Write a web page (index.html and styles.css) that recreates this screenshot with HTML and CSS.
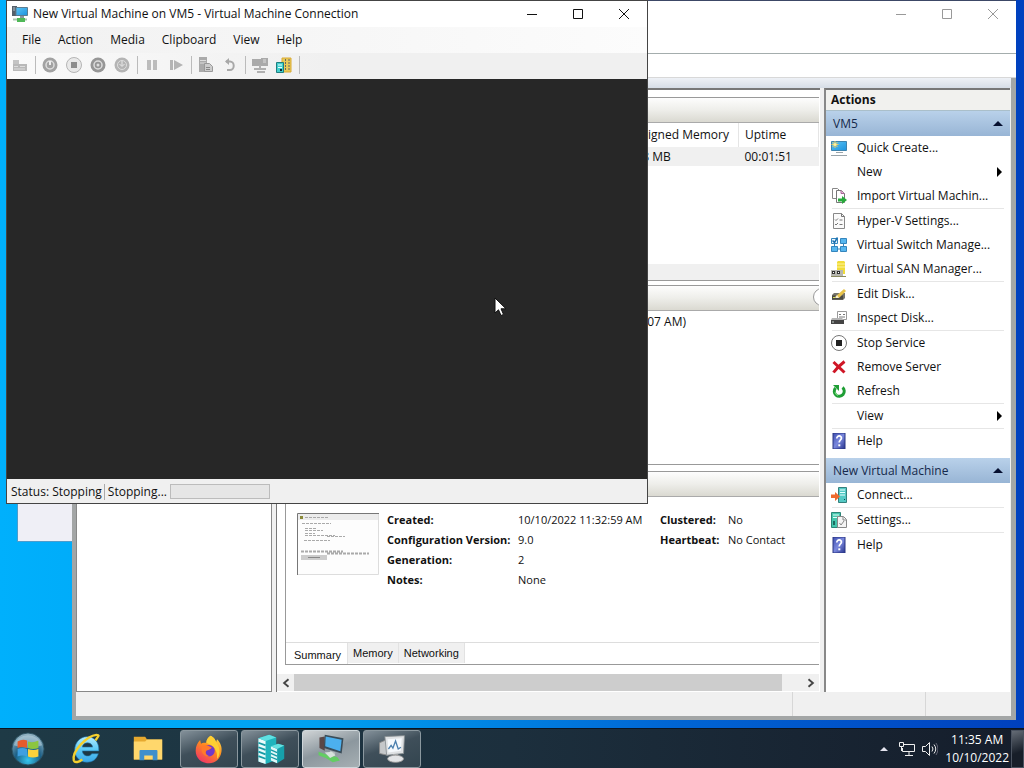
FILE: index.html
```html
<!DOCTYPE html>
<html lang="en">
<head>
  <meta charset="UTF-8" />
  <meta name="viewport" content="width=device-width, initial-scale=1.0"/>
  <title>Hyper-V Manager</title>
  <link rel="stylesheet" href="styles.css">
</head>
<body>
  <svg class="defs" aria-hidden="true">
    <defs>
      <linearGradient id="screen-blue" x1="0" y1="0" x2="1" y2="1">
        <stop offset="0" stop-color="#5cc4f5"/><stop offset="1" stop-color="#1c92dd"/>
      </linearGradient>
      <linearGradient id="help-blue" x1="0" y1="0" x2="1" y2="1">
        <stop offset="0" stop-color="#3f4fb0"/><stop offset=".5" stop-color="#7a88dd"/><stop offset="1" stop-color="#27338c"/>
      </linearGradient>
      <radialGradient id="orb" cx=".5" cy=".85" r=".8">
        <stop offset="0" stop-color="#35c5ee"/><stop offset=".5" stop-color="#1b5f86"/><stop offset="1" stop-color="#8fb0c0"/>
      </radialGradient>
      <linearGradient id="ie" x1="0" y1="0" x2="0" y2="1">
        <stop offset="0" stop-color="#b4ecff"/><stop offset=".5" stop-color="#5ccbf7"/><stop offset="1" stop-color="#39a7e8"/>
      </linearGradient>
      <linearGradient id="fox" x1=".8" y1="0" x2=".2" y2="1">
        <stop offset="0" stop-color="#ffe14a"/><stop offset=".45" stop-color="#ff8a1e"/><stop offset="1" stop-color="#f0306a"/>
      </linearGradient>
      <symbol id="i-help" viewBox="0 0 16 16">
        <path d="M2 0h12v16H2z" fill="url(#help-blue)" stroke="#2b3784"/>
        <path d="M5.800 5.500c0-3.600 5-3.200 4.600-.2-.2 1.700-2.200 1.900-2.200 4.200" fill="none" stroke="#fff" stroke-width="1.700"/>
        <path d="M7.300 11.300h2v2h-2z" fill="#fff"/>
      </symbol>
      <symbol id="i-vm" viewBox="0 0 16 16">
        <path d="M0 0h5v10H0z" fill="#55606a"/><path d="M1 2h2M1 4h2" stroke="#b5c0c8"/>
        <path d="M4 1.500h11.500v8H4z" fill="url(#screen-blue)" stroke="#5c7c90"/>
        <path d="M8 10h4v2H8z" fill="#8a979e"/>
        <path d="M1 13.500h14" stroke="#a8c4ae" stroke-width="2"/>
        <path d="M5 12h8v4H5z" fill="#4fb857"/>
      </symbol>
    </defs>
  </svg>

  <main class="desktop">
    <div class="window window--hidden"></div>

    <section class="window manager" aria-label="Hyper-V Manager">
      <header class="manager__title">
        <button class="caption" aria-label="Minimize"><svg viewBox="0 0 12 12"><path d="M1 6.500h10"/></svg></button>
        <button class="caption" aria-label="Maximize"><svg viewBox="0 0 12 12"><path d="M1.500 1.500h9v9h-9z"/></svg></button>
        <button class="caption" aria-label="Close"><svg viewBox="0 0 12 12"><path d="M1 1l10 10M11 1L1 11"/></svg></button>
      </header>
      <div class="manager__toolbar"></div>

      <div class="manager__body">
        <nav class="tree"></nav>

        <div class="center">
          <div class="center__groups">
            <section class="group group--machines">
              <div class="group__header"></div>
              <table class="machines">
                <thead>
                  <tr><th class="machines__spacer"></th><th class="machines__memory">Assigned Memory</th><th>Uptime</th></tr>
                </thead>
                <tbody>
                  <tr><td></td><td>768 MB</td><td>00:01:51</td></tr>
                </tbody>
              </table>
              <div class="group__scroll"></div>
            </section>

            <section class="group group--checkpoints">
              <div class="group__header"><span class="collapse"></span></div>
              <p class="checkpoint">Automatic Checkpoint - New Virtual Machine - (10/10/2022 - 11:33:07 AM)</p>
            </section>

            <section class="group group--details">
              <div class="group__header"></div>
              <div class="details">
                <svg class="thumbnail" viewBox="0 0 82 62">
                  <path d="M0 0h82v62H0z" fill="#fdfdfd"/>
                  <path d="M1 1h80v6H1z" fill="#ececec"/>
                  <path d="M.5 62V.5H82" fill="none" stroke="#777"/>
                  <path d="M81.500 1v60.500H1" fill="none" stroke="#ddd"/>
                  <path d="M3 3h3v3H3z" fill="#8a8a3a"/>
                  <g stroke="#aaa" stroke-dasharray="3 1">
                    <path d="M8 4.500h23M5 10.500h29M8 15.500h12M8 17.500h18M8 20.500h10M8 22.500h30M30 23.500h18M7 27.500h26"/>
                    <path d="M4 38.500h42M30 40.500h42" stroke-width="2"/>
                  </g>
                  <path d="M4 42h26v5H4z" fill="#ccc"/><path d="M11 44.500h12" stroke="#888"/>
                </svg>
                <dl class="facts facts--main">
                  <dt>Created:</dt><dd>10/10/2022 11:32:59 AM</dd>
                  <dt>Configuration Version:</dt><dd>9.0</dd>
                  <dt>Generation:</dt><dd>2</dd>
                  <dt>Notes:</dt><dd>None</dd>
                </dl>
                <dl class="facts facts--state">
                  <dt>Clustered:</dt><dd>No</dd>
                  <dt>Heartbeat:</dt><dd>No Contact</dd>
                </dl>
              </div>
              <div class="tabs" role="tablist">
                <button class="tab tab--active" role="tab" aria-selected="true">Summary</button>
                <button class="tab" role="tab">Memory</button>
                <button class="tab" role="tab">Networking</button>
              </div>
            </section>
          </div>

          <div class="scrollbar">
            <button class="scrollbar__arrow" aria-label="Scroll left"><svg viewBox="0 0 8 8"><path d="M6 1L2.500 4 6 7"/></svg></button>
            <div class="scrollbar__track"><div class="scrollbar__thumb"></div></div>
            <button class="scrollbar__arrow" aria-label="Scroll right"><svg viewBox="0 0 8 8"><path d="M2 1l3.500 3L2 7"/></svg></button>
          </div>
        </div>

        <aside class="actions">
          <h2 class="actions__title">Actions</h2>
          <button class="actions__group">VM5 <span class="arrow-up"></span></button>
          <ul class="actions__list">
            <li><button class="action">
              <svg viewBox="0 0 16 16"><path d="M.5 1.500h15v9H.5z" fill="url(#screen-blue)" stroke="#3d83ae"/><path d="M5 12.500h7M0 15.500h16" stroke="#9aa4aa"/><path d="M4 1v7M.5 4.500h7M1.500 2l5 5M6.500 2l-5 5" stroke="#f3cd56"/><circle cx="4" cy="4.500" r="1.500" fill="#fff0a0"/></svg>
              Quick Create...</button></li>
            <li><button class="action"><span class="action__blank"></span>New <span class="arrow-right"></span></button></li>
            <li><button class="action">
              <svg viewBox="0 0 16 16"><path d="M1.500.5h5l2 2v8h-7z" fill="#fff" stroke="#888"/><path d="M5.500 2.500h5l3 3v9h-8z" fill="#fff" stroke="#777"/><path d="M10 2.500v3h3.500" fill="#eab3d6" stroke="#a9669a"/><path d="M7 10.500h4V8l5 4-5 4v-2.500H7z" fill="#27a83b"/></svg>
              Import Virtual Machin...</button></li>
            <li class="divided"><button class="action">
              <svg viewBox="0 0 16 16"><path d="M2.500.5h8l3 3v12h-11z" fill="#fafafa" stroke="#888"/><path d="M10.500.5v3h3M4 6.500l1 1 2-2M4 11l1 1 2-2M8.500 7h3M8.500 11.500h3" fill="none" stroke="#777"/></svg>
              Hyper-V Settings...</button></li>
            <li><button class="action">
              <svg viewBox="0 0 16 16"><path d="M.5 1.500h6v5h-6z" fill="#e9f6ff" stroke="#3485bd"/><path d="M1.500 3.500l2 2 3-5" fill="none" stroke="#1b6fae" stroke-width="1.500"/><path d="M9.500 1.500h6v5h-6zM.5 9.500h6v5h-6zM9.500 9.500h6v5h-6z" fill="#56b6ef" stroke="#3485bd"/><path d="M3.500 7v2M12.500 7v2M7 12h2" stroke="#3485bd"/></svg>
              Virtual Switch Manage...</button></li>
            <li><button class="action">
              <svg viewBox="0 0 16 16"><path d="M6 1l1-1h6l1 1v12H6z" fill="#f0dc3a"/><path d="M6 3h8M6 6h8" stroke="#fff39a"/><path d="M0 9h12v6H0z" fill="#b7b7b0"/><path d="M1 10h3v3H1zM6 10h3v3H6z" fill="#333"/><path d="M2 11h1v1H2zM7 11h1v1H7z" fill="#fff"/><path d="M0 15.500h15" stroke="#8a8a60"/></svg>
              Virtual SAN Manager...</button></li>
            <li class="divided"><button class="action">
              <svg viewBox="0 0 16 16"><path d="M1 9l2-2h11v5l-2 2H1z" fill="#77756c"/><path d="M1 9.500h11v4H1z" fill="#4a4a44"/><path d="M2 11.500h2" stroke="#d8e04f"/><path d="M4 11l9-8 2 2-7 7z" fill="#e8c34a"/><path d="M4 12l2-3 2 3z" fill="#f8f0d0"/></svg>
              Edit Disk...</button></li>
            <li><button class="action">
              <svg viewBox="0 0 16 16"><path d="M6.500 1.500h9v8h-9z" fill="#fff" stroke="#999"/><path d="M8 4.500h2M12 4.500h2M8 7h6" stroke="#777"/><path d="M1 8h10l2 2v4H0v-4z" fill="#b5b5b5"/><path d="M0 10h13v4H0z" fill="#444"/><path d="M1 12h2" stroke="#c4d1cb"/></svg>
              Inspect Disk...</button></li>
            <li class="divided"><button class="action">
              <svg viewBox="0 0 16 16"><circle cx="8" cy="8" r="7.500" fill="#fff" stroke="#777"/><path d="M5 5h6v6H5z" fill="#222"/></svg>
              Stop Service</button></li>
            <li><button class="action">
              <svg viewBox="0 0 16 16"><path d="M2.500 3l11 10.500M13.500 2.500C9 6 5 10 2.500 13.500" fill="none" stroke="#cf1626" stroke-width="3"/></svg>
              Remove Server</button></li>
            <li><button class="action">
              <svg viewBox="0 0 16 16"><path d="M4.500 5A5 5 0 1 0 11.500 4.500" fill="none" stroke="#1f9e35" stroke-width="3"/><path d="M2 2h6v6z" fill="#1f9e35"/><path d="M4 9a4 4 0 0 0 3 3.500" stroke="#7be07d" fill="none"/></svg>
              Refresh</button></li>
            <li class="divided"><button class="action"><span class="action__blank"></span>View <span class="arrow-right"></span></button></li>
            <li class="divided"><button class="action"><svg><use href="#i-help"/></svg>Help</button></li>
          </ul>

          <button class="actions__group">New Virtual Machine <span class="arrow-up"></span></button>
          <ul class="actions__list">
            <li><button class="action">
              <svg viewBox="0 0 16 16"><path d="M7.500.5h8v15h-8z" fill="#54c9c4" stroke="#34807d"/><path d="M9 3h5M9 5.500h5M9 8h5" stroke="#e7ffff"/><path d="M13 12h1v1h-1z" fill="#145"/><path d="M0 7.500h4V5l5 4.500L4 14v-3H0z" fill="#ee6a2d"/></svg>
              Connect...</button></li>
            <li class="divided"><button class="action">
              <svg viewBox="0 0 16 16"><path d="M.5.5h9v15h-9z" fill="#45c6ad" stroke="#2b8577"/><path d="M2 3h6M2 5.500h6" stroke="#e0fff8"/><path d="M2 9h2v4H2z" fill="#1c6b60"/><path d="M6.500 4.500h6l3 3v8h-9z" fill="#f4f4f4" stroke="#888"/><path d="M12 5v3h3M8.500 11l1.500 2 3-4" fill="none" stroke="#888"/></svg>
              Settings...</button></li>
            <li class="divided"><button class="action"><svg><use href="#i-help"/></svg>Help</button></li>
          </ul>
        </aside>
      </div>

      <footer class="manager__status"><span></span><span></span><span></span></footer>
    </section>

    <section class="window connection" aria-label="Virtual Machine Connection">
      <header class="connection__title">
        <svg class="icon"><use href="#i-vm"/></svg>
        <h1>New Virtual Machine on VM5 - Virtual Machine Connection</h1>
        <button class="caption" aria-label="Minimize"><svg viewBox="0 0 12 12"><path d="M1 6.500h10"/></svg></button>
        <button class="caption" aria-label="Maximize"><svg viewBox="0 0 12 12"><path d="M1.500 1.500h9v9h-9z"/></svg></button>
        <button class="caption" aria-label="Close"><svg viewBox="0 0 12 12"><path d="M1 1l10 10M11 1L1 11"/></svg></button>
      </header>

      <nav class="menu">
        <button>File</button>
        <button>Action</button>
        <button>Media</button>
        <button>Clipboard</button>
        <button>View</button>
        <button>Help</button>
      </nav>

      <div class="toolbar">
        <button aria-label="Ctrl+Alt+Del"><svg viewBox="0 0 16 16"><path d="M1 3h6v5H1z" fill="#c4c4c4"/><path d="M1 7h14v7H1z" fill="#b9b9b9"/><path d="M2 9.500h4M8 9.500h5M2 12h11" stroke="#dedede"/></svg></button>
        <i class="toolbar__line"></i>
        <button aria-label="Start"><svg viewBox="0 0 16 16"><circle cx="8" cy="8" r="7.500" fill="#a2a2a2"/><circle cx="8" cy="8" r="4" fill="none" stroke="#ddd" stroke-width="1.500"/><path d="M8 4v4" stroke="#eee" stroke-width="2"/></svg></button>
        <button aria-label="Turn off"><svg viewBox="0 0 16 16"><circle cx="8" cy="8" r="7.500" fill="#e9e9e9" stroke="#b5b5b5"/><path d="M5 5h6v6H5z" fill="#8d8d8d"/></svg></button>
        <button aria-label="Shut down"><svg viewBox="0 0 16 16"><circle cx="8" cy="8" r="7.500" fill="#969696"/><circle cx="8" cy="8" r="4" fill="none" stroke="#ddd" stroke-width="1.500"/><circle cx="8" cy="8" r="1.500" fill="#ddd"/></svg></button>
        <button aria-label="Save"><svg viewBox="0 0 16 16"><circle cx="8" cy="8" r="7.500" fill="#b4b4b4"/><circle cx="8" cy="8" r="4.500" fill="none" stroke="#ddd"/><path d="M8 4v5M5.500 7L8 9.500 10.500 7" fill="none" stroke="#e8e8e8"/></svg></button>
        <i class="toolbar__line"></i>
        <button aria-label="Pause"><svg viewBox="0 0 16 16"><path d="M3 3h4v10H3zM9 3h4v10H9z" fill="#bcbcbc"/></svg></button>
        <button aria-label="Reset"><svg viewBox="0 0 16 16"><path d="M2 3h3v10H2zM6 3l9 5-9 5z" fill="#b4b4b4"/></svg></button>
        <i class="toolbar__line"></i>
        <button aria-label="Checkpoint"><svg viewBox="0 0 16 16"><path d="M1 0h8v15H1z" fill="#aaa"/><path d="M2 3.500h6M2 6h6" stroke="#ddd"/><path d="M6.500 6.500h5l3 3v5h-8z" fill="#ccc" stroke="#999"/><path d="M8 10.500h4M8 12.500h4" stroke="#888"/></svg></button>
        <button aria-label="Revert"><svg viewBox="0 0 16 16"><path d="M4 4.500h4a3.500 4 0 0 1 0 8.500H5" fill="none" stroke="#a8a8a8" stroke-width="2"/><path d="M3 4.500L7 1v7z" fill="#a8a8a8"/></svg></button>
        <i class="toolbar__line"></i>
        <button aria-label="Enhanced session"><svg viewBox="0 0 16 16"><path d="M0 2h10v7H0zM9 1h7v8H9z" fill="#aaa"/><path d="M8 8v4M2 12h12M5 15h8" stroke="#b0b0b0" stroke-width="2"/><path d="M11 3h3M11 5h3" stroke="#ddd"/></svg></button>
        <button aria-label="Share"><svg viewBox="0 0 16 16"><path d="M6 1h9v14H6z" fill="#e8ca58" stroke="#d9aa35"/><path d="M9.500 2v12M13 2v12" stroke="#666" stroke-dasharray="2 1"/><path d="M.5 5.500h7v10h-7z" fill="#42cfcd" stroke="#1f7f80"/><path d="M2 8h4M2 10.500h4" stroke="#eaffff"/><path d="M4 12h2v2H4z" fill="#123"/></svg></button>
        <i class="toolbar__line"></i>
      </div>

      <div class="screen"></div>

      <footer class="connection__status">
        <span class="connection__state">Status: Stopping</span>
        <span id="task">Stopping...</span>
        <div class="progress" role="progressbar" aria-labelledby="task"></div>
      </footer>
    </section>

    <svg class="cursor" viewBox="0 0 13 20"><path d="M1 1v15l3.500-3.200L7 18.500l2.500-1.100L7 11.800h5z" fill="#fff" stroke="#111"/></svg>
  </main>

  <footer class="taskbar">
    <button class="task task--start" aria-label="Start">
      <svg viewBox="0 0 36 36"><circle cx="18" cy="18" r="17" fill="url(#orb)" stroke="#2b5060"/><path d="M3 14a15.500 14 0 0 1 30 0q-15 6-30 0" fill="#cfe0e8" opacity=".45"/><path d="M7 10q5-3 10-1v8q-5-2-10 0z" fill="#e65a2c"/><path d="M18 10q5 2 11-1v8q-6 2-11 0z" fill="#8cc63f"/><path d="M7 18q5-2 10 0v8q-5-2-10 0z" fill="#3f9fe0"/><path d="M18 18q6 2 11 0v8q-6 2-11 0z" fill="#fbd13b"/></svg>
    </button>
    <button class="task" aria-label="Internet Explorer">
      <svg viewBox="0 0 36 36"><path d="M18 5c8 0 13 6 12.500 15H13c.5 6 8 7 10 3h7c-2 6-6 9-12 9C10 32 5 26 5 19S10 5 18 5zm-5 11h11c-.5-6-10.500-6-11 0z" fill="url(#ie)" stroke="#2377ae" stroke-width=".6"/><path d="M27 9c3-5 5-6 1-6C18 4 2 20 4 30c1 3 6 2 9-1" fill="none" stroke="#f4cf2e" stroke-width="2.500"/></svg>
    </button>
    <button class="task" aria-label="File Explorer">
      <svg viewBox="0 0 36 36"><path d="M3 5h12l2 3h16v21H3z" fill="#e6a92f"/><path d="M3 10h12l2-2h16v21H3z" fill="#ffd76c"/><path d="M9 20q0-1 1-1h17q1 0 1 1v10h-5v-5h-9v5H9z" fill="#3f8fcc"/></svg>
    </button>
    <button class="task task--open" aria-label="Firefox">
      <svg viewBox="0 0 36 36"><path d="M20 3c4 2 5 5 6 7l1-3c4 4 6 9 5 14-1 8-7 13-14 13C9 34 3 28 3 20c0-5 2-9 5-12l1 4c2-1 4-1 6-1 0-4 2-6 5-8z" fill="url(#fox)"/><path d="M20 3c4 2 5 5 6 7 6 8 4 16 1 19 1-8-3-15-12-18 0-4 2-6 5-8z" fill="#ffcf32"/><circle cx="18" cy="20" r="6.500" fill="#7139ca"/><path d="M10 15c4-3 8 0 11 1-1 3-5 3-6 4-2 3 1 6 4 6-6 2-11-4-9-11z" fill="#ff7a2a"/></svg>
    </button>
    <button class="task task--open" aria-label="Hyper-V Manager">
      <svg viewBox="0 0 36 36"><path d="M5 6l12-4 8 3v25l-12 5-8-3z" fill="#1fb4bd"/><path d="M5 6l8 3v26l-8-3z" fill="#e8fbfb"/><path d="M5 11l8 3M5 16l8 3M5 21l8 3M5 26l8 3" stroke="#159aa5" stroke-width="2"/><path d="M5 6l12-4 8 3-12 4z" fill="#5fe0e2"/><path d="M19 15l8-3 7 2v15l-8 5-7-3z" fill="#16a0ab"/><path d="M19 15l7 3v16l-7-3z" fill="#e0f8f8"/><path d="M19 19l7 3M19 23l7 3M19 27l7 3" stroke="#159aa5" stroke-width="1.500"/><path d="M19 15l8-3 7 2-8 4z" fill="#66e0e0"/></svg>
    </button>
    <button class="task task--open task--active" aria-label="Virtual Machine Connection">
      <svg viewBox="0 0 36 36"><path d="M5 5l6-1v16l-6-3z" fill="#5a4747"/><path d="M11 2l21 4-2 17-20-6z" fill="#3a4c58"/><path d="M12 4l18 3.500-1.500 13L11.500 15z" fill="#4cb0ee"/><path d="M17 20l6 2-1 4-6-2z" fill="#b4bcbf"/><path d="M4 21l11 4 10 2 3 4-8 2-8-5-8-3z" fill="#63cd63"/><path d="M11 22l8-1 4 4-6 3z" fill="#d7e2dc"/></svg>
    </button>
    <button class="task task--open" aria-label="Performance Monitor">
      <svg viewBox="0 0 36 36"><path d="M4 11l9-4v18l-9-2z" fill="#c5c8ca" stroke="#888"/><path d="M10 4l22-1-1 20-19 2z" fill="#dfe2e4" stroke="#8a9094"/><path d="M13 7l16-1-1 14-14 2z" fill="#f5f9fc"/><path d="M14 18l3-4 2 3 3-8 3 9 3-2" fill="none" stroke="#4a7fae" stroke-width="1.500"/><path d="M19 24h6v4h-6z" fill="#bbb"/><ellipse cx="22" cy="29" rx="9" ry="4" fill="#e2e4e6" stroke="#999"/></svg>
    </button>

    <div class="tray">
      <span class="arrow-up arrow-up--light"></span>
      <svg class="icon" viewBox="0 0 16 16"><path d="M5 3.500h10.500v7H3.500V7M10 11v3M6 14.500h8M.5 1.500h4v4h-4zM2.500 6v4" fill="none" stroke="#eee"/></svg>
      <svg class="icon" viewBox="0 0 16 16"><path d="M.5 5.500h3l4-4v13l-4-4h-3zM10 5.500q2 2.500 0 5M12 3.500q3.500 4.500 0 9" fill="none" stroke="#eee"/><path d="M14 2q4 6 0 12" fill="none" stroke="#667"/></svg>
      <time class="clock" datetime="2022-10-10T11:35">11:35 AM<br>10/10/2022</time>
      <button class="peek" aria-label="Show desktop"></button>
    </div>
  </footer>
</body>
</html>
```

FILE: styles.css
```css
* {
  box-sizing: border-box;
}

body {
  margin: 0;
  height: 100vh;
  display: flex;
  flex-direction: column;
  overflow: hidden;
  font-family: "Open Sans", "Noto Sans", sans-serif;
  font-size: 12px;
  line-height: 16px;
  color: #111;
}

button {
  margin: 0;
  padding: 0;
  border: 0;
  background: none;
  font: inherit;
  color: inherit;
}

h1, h2, p, ul, dl, dd {
  margin: 0;
  padding: 0;
}

h1, h2 {
  font-size: 12px;
  font-weight: 400;
}

ul {
  list-style: none;
}

.defs {
  position: absolute;
  width: 0;
  height: 0;
}

.icon {
  width: 16px;
  height: 16px;
}

/* Desktop and windows */
.desktop {
  position: relative;
  flex: 1;
  min-height: 0;
  background: linear-gradient(90deg, #00b0fc, #00a2f2 30%, #0066d4 65%, #0040be);
}

.window {
  position: absolute;
  display: flex;
  flex-direction: column;
}

.window--hidden {
  left: 17px;
  top: 100px;
  width: 80px;
  bottom: 186px;
  background: #efeff6;
  border: 1px solid #4d9ccc;
}

.caption {
  width: 46px;
  height: 26px;
}

.caption svg {
  width: 12px;
  height: 12px;
  display: block;
  margin: 0 auto;
  fill: none;
  stroke: #111;
}

/* Hyper-V Manager */
.manager {
  left: 72px;
  right: 8px;
  top: 0;
  bottom: 8px;
  background: #f0f0f0;
  border-top: 1px solid #3c4866;
}

.manager__title {
  height: 53px;
  display: flex;
  justify-content: flex-end;
  background: #fff;
  border-bottom: 1px solid #a4adad;
}

.manager__title svg {
  stroke: #999;
}

.manager__toolbar {
  height: 24px;
  background: #fff;
  border-bottom: 1px solid #d8d8d8;
}

.manager__body {
  flex: 1;
  min-height: 0;
  display: grid;
  grid-template-columns: 196px minmax(0, 1fr) 186px;
  column-gap: 4px;
  padding: 10px 1px 0 0;
  background: linear-gradient(#eef1f6, #d6dde6 10px, #f0f0f0 10px);
  border: solid #a3a6a6;
  border-width: 0 5px 0 4px;
}

.tree {
  background: #fff;
  border: 1px solid #888;
}

.center {
  min-width: 0;
  display: flex;
  flex-direction: column;
  padding: 7px 1px 1px 8px;
  background: #fff;
  border-top: 2px solid #777;
  border-left: 1px solid #777;
}

.center__groups {
  flex: 1;
  min-height: 0;
  display: flex;
  flex-direction: column;
}

.group {
  display: flex;
  flex-direction: column;
  border: 1px solid #999;
  border-right: 0;
}

.group--machines {
  flex: 184;
}

.group--checkpoints {
  flex: 181;
  margin: 4px 0 6px;
}

.group--details {
  flex: 194;
}

.group__header {
  height: 25px;
  flex-shrink: 0;
  overflow: hidden;
  background: linear-gradient(#fdfdfd, #eeeeea 50%, #dad9d1);
  border-bottom: 1px solid #aaa;
}

.group__scroll {
  height: 16px;
  margin-top: auto;
  background: #f0f0f0;
}

.collapse {
  display: block;
  width: 18px;
  height: 18px;
  margin: 2px -12px 0 auto;
  background: #fff;
  border: 1px solid #999;
  border-radius: 50%;
}

.machines {
  width: 100%;
  table-layout: fixed;
  border-collapse: collapse;
}

.machines th,
.machines td {
  padding: 0 6px;
  text-align: left;
  font-weight: 400;
  white-space: nowrap;
}

.machines th {
  height: 24px;
  width: 80px;
  border-right: 1px solid #e5e5e5;
}

.machines .machines__spacer {
  width: auto;
}

.machines .machines__memory {
  width: 116px;
}

.machines td {
  height: 19px;
  background: #f0f0f0;
}

.checkpoint {
  padding-top: 3px;
  width: 400px;
  display: flex;
  justify-content: flex-end;
  white-space: nowrap;
}

.details {
  flex: 1;
  display: flex;
  padding: 13px 0 0 11px;
  white-space: nowrap;
}

.thumbnail {
  width: 82px;
  height: 62px;
  margin-top: 3px;
}

.facts {
  display: grid;
  align-content: start;
  font-size: 11px;
  line-height: 20px;
}

.facts dt {
  font-weight: 700;
}

.facts--main {
  grid-template-columns: 131px 142px;
  margin-left: 8px;
}

.facts--state {
  grid-template-columns: 68px auto;
}

.tabs {
  height: 22px;
  display: flex;
  align-items: flex-start;
  padding-left: 2px;
  border-top: 1px solid #ddd;
}

.tab {
  height: 20px;
  padding: 0 5px;
  font-family: "Liberation Sans", sans-serif;
  font-size: 11px;
  background: #f0f0f0;
  border-right: 1px solid #e2e2e2;
}

.tab--active {
  height: 21px;
  padding: 3px 6px 0;
  background: #fff;
}

.scrollbar {
  height: 17px;
  margin: 9px 0 0 -8px;
  display: flex;
  background: #f0f0f0;
}

.scrollbar__arrow {
  width: 17px;
  display: flex;
  align-items: center;
  justify-content: center;
}

.scrollbar__arrow svg {
  width: 10px;
  height: 10px;
  fill: none;
  stroke: #444;
  stroke-width: 1.5;
}

.scrollbar__track {
  flex: 1;
}

.scrollbar__thumb {
  width: 96%;
  height: 100%;
  background: #cdcdcd;
}

.manager__status {
  height: 28px;
  display: flex;
  justify-content: flex-end;
  border: solid #a3a6a6;
  border-width: 0 5px 4px 4px;
}

.manager__status span {
  width: 133px;
  border-left: 1px solid #d7d7d7;
}

.manager__status span:last-child {
  width: 86px;
}

.manager__status span:first-child {
  flex: 1;
  border: 0;
}

/* Actions pane */
.actions {
  background: #fff;
  border-top: 2px solid #777;
  border-left: 2px solid #888;
}

.actions__title {
  height: 21px;
  padding: 2px 5px;
  font-weight: 700;
  background: #f1f1ee;
  border-bottom: 1px solid #aabfca;
}

.actions__group {
  width: 100%;
  height: 25px;
  display: flex;
  align-items: center;
  padding: 0 7px;
  text-align: left;
  background: linear-gradient(#b9d1ea, #98b5d5);
  color: #15294b;
}

.actions__list {
  padding-bottom: 5px;
}

.divided::before {
  content: "";
  display: block;
  height: 1px;
  margin: 0 6px;
  background: #e6e6e6;
}

.action {
  width: 100%;
  height: 24px;
  display: flex;
  align-items: center;
  padding: 0 8px 0 5px;
  text-align: left;
  white-space: nowrap;
}

.action svg,
.action__blank {
  width: 16px;
  height: 16px;
  margin-right: 10px;
}

.arrow-up,
.arrow-right {
  margin-left: auto;
  border: 5px solid transparent;
}

.arrow-up {
  border-top: 0;
  border-bottom-color: #061030;
}

.arrow-right {
  border-right: 0;
  border-left-color: #000;
}

/* Virtual Machine Connection */
.connection {
  left: 6px;
  top: 0;
  width: 62.7%;
  bottom: 224px;
  background: #f0f0f0;
  border: 1px solid #444;
}

.connection__title {
  height: 26px;
  flex-shrink: 0;
  display: flex;
  align-items: center;
  background: #fff;
}

.connection__title .icon {
  margin: 0 5px;
}

.connection__title h1 {
  flex: 1;
}

.menu {
  height: 26px;
  flex-shrink: 0;
  display: flex;
  align-items: center;
  gap: 17px;
  padding-left: 15px;
  background: linear-gradient(90deg, #f1f1f1, #fcfcfc);
}

.toolbar {
  height: 26px;
  flex-shrink: 0;
  display: flex;
  align-items: center;
  gap: 8px;
  padding: 0 0 2px 5px;
  background: linear-gradient(90deg, #fafafa, #f0f0f0 50%);
}

.toolbar button,
.toolbar svg {
  display: block;
  width: 16px;
  height: 16px;
}

.toolbar__line {
  width: 1px;
  height: 18px;
  margin: 0 -2px 0 -1px;
  background: #bbb;
}

.screen {
  flex: 1;
  background: #272727;
}

.connection__status {
  height: 24px;
  flex-shrink: 0;
  display: flex;
  align-items: center;
  gap: 3px;
  padding: 1px 0 0 4px;
}

.connection__state {
  padding-right: 2px;
  border-right: 1px solid #aaa;
}

.progress {
  width: 100px;
  height: 15px;
  background: #e6e6e6;
  border: 1px solid #bcbcbc;
}

.cursor {
  position: absolute;
  left: 494px;
  top: 297px;
  width: 13px;
  height: 20px;
}

/* Taskbar */
.taskbar {
  height: 40px;
  display: flex;
  align-items: center;
  gap: 3px;
  background: linear-gradient(90deg, #1e3a46, #1c2f3d 50%, #151d2b);
  border-top: 1px solid #0a1522;
}

.task {
  width: 58px;
  height: 38px;
  display: flex;
  align-items: center;
  justify-content: center;
}

.task--start {
  width: 55px;
}

.task svg {
  width: 34px;
  height: 34px;
}

.task--open {
  background: linear-gradient(160deg, #84919a, #3f4f5a 45%, #33454f);
  border: 1px solid #8b989f;
  border-radius: 3px;
}

.task--open svg {
  width: 32px;
  height: 32px;
}

.task--active {
  background: linear-gradient(160deg, #d0d4d6, #8c979e 50%, #a6afb3);
  border-color: #ced6da;
}

.tray {
  flex: 1;
  display: flex;
  align-items: center;
  justify-content: flex-end;
  gap: 7px;
  color: #fff;
}

.tray .arrow-up {
  border-width: 0 4px 4px;
  margin-right: 4px;
}

.arrow-up--light {
  border-bottom-color: #e4e4ee;
}

.clock {
  line-height: 18px;
  text-align: center;
}

.peek {
  width: 13px;
  height: 38px;
  margin-left: -5px;
  background: linear-gradient(160deg, #656c76, #171e29 60%);
  border: 1px solid #4b5360;
}
```
